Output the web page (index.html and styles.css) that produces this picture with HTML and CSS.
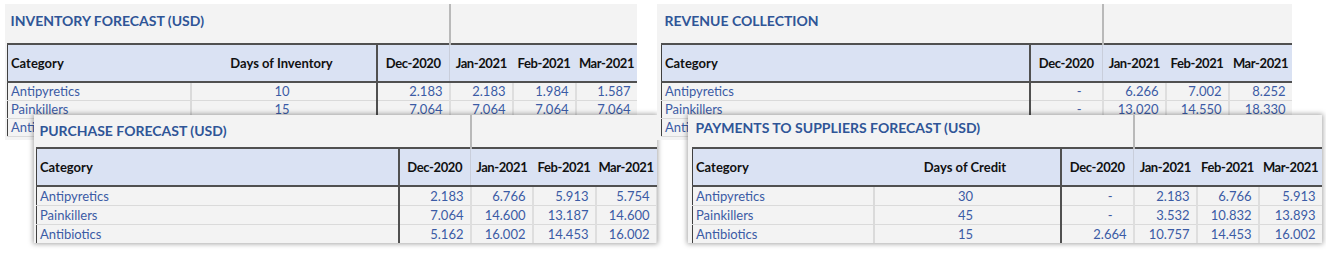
FILE: index.html
```html
<!DOCTYPE html>
<html>
<head>
<meta charset="utf-8">
<link rel="stylesheet" href="styles.css">
</head>
<body>
<div class="board">
  <div class="stack stack-left">
    <section class="panel back inv">
      <table class="sheet w630">
        <colgroup><col style="width:183px"><col style="width:186px"><col style="width:73px"><col style="width:63px"><col style="width:63px"><col style="width:62px"></colgroup>
        <tr class="title-row"><td colspan="3" class="title">INVENTORY FORECAST (USD)</td><td colspan="3" class="title-split"></td></tr>
        <tr class="head"><th class="c0 left">Category</th><th>Days of Inventory</th><th class="split mon">Dec-2020</th><th class="mfirst mon">Jan-2021</th><th class="mon">Feb-2021</th><th class="mon">Mar-2021</th></tr>
        <tr class="row"><td class="c0 cat sep">Antipyretics</td><td class="mid">10</td><td class="num split">2.183</td><td class="num">2.183</td><td class="num">1.984</td><td class="num">1.587</td></tr>
        <tr class="row"><td class="c0 cat sep">Painkillers</td><td class="mid">15</td><td class="num split">7.064</td><td class="num">7.064</td><td class="num">7.064</td><td class="num">7.064</td></tr>
        <tr class="row"><td class="c0 cat sep">Antibiotics</td><td class="mid">20</td><td class="num split">5.162</td><td class="num">5.162</td><td class="num">5.162</td><td class="num">5.162</td></tr>
      </table>
    </section>
    <section class="panel front pur">
      <table class="sheet w620">
        <colgroup><col style="width:362px"><col style="width:72px"><col style="width:62px"><col style="width:63px"><col style="width:61px"></colgroup>
        <tr class="title-row"><td colspan="2" class="title">PURCHASE FORECAST (USD)</td><td colspan="3" class="title-split"></td></tr>
        <tr class="head"><th class="c0 left">Category</th><th class="split mon">Dec-2020</th><th class="mfirst mon">Jan-2021</th><th class="mon">Feb-2021</th><th class="mon">Mar-2021</th></tr>
        <tr class="row"><td class="c0 cat">Antipyretics</td><td class="num split">2.183</td><td class="num">6.766</td><td class="num">5.913</td><td class="num">5.754</td></tr>
        <tr class="row"><td class="c0 cat">Painkillers</td><td class="num split">7.064</td><td class="num">14.600</td><td class="num">13.187</td><td class="num">14.600</td></tr>
        <tr class="row"><td class="c0 cat">Antibiotics</td><td class="num split">5.162</td><td class="num">16.002</td><td class="num">14.453</td><td class="num">16.002</td></tr>
      </table>
    </section>
  </div>
  <div class="stack stack-right">
    <section class="panel back rev">
      <table class="sheet w631">
        <colgroup><col style="width:368px"><col style="width:73px"><col style="width:63px"><col style="width:63px"><col style="width:64px"></colgroup>
        <tr class="title-row"><td colspan="2" class="title">REVENUE COLLECTION</td><td colspan="3" class="title-split"></td></tr>
        <tr class="head"><th class="c0 left">Category</th><th class="split mon">Dec-2020</th><th class="mfirst mon">Jan-2021</th><th class="mon">Feb-2021</th><th class="mon">Mar-2021</th></tr>
        <tr class="row"><td class="c0 cat">Antipyretics</td><td class="num split dash">-</td><td class="num">6.266</td><td class="num">7.002</td><td class="num">8.252</td></tr>
        <tr class="row"><td class="c0 cat">Painkillers</td><td class="num split dash">-</td><td class="num">13.020</td><td class="num">14.550</td><td class="num">18.330</td></tr>
        <tr class="row"><td class="c0 cat">Antibiotics</td><td class="num split dash">-</td><td class="num">15.400</td><td class="num">16.100</td><td class="num">17.200</td></tr>
      </table>
    </section>
    <section class="panel front pay">
      <table class="sheet w630">
        <colgroup><col style="width:181px"><col style="width:187px"><col style="width:73px"><col style="width:63px"><col style="width:62px"><col style="width:64px"></colgroup>
        <tr class="title-row"><td colspan="3" class="title">PAYMENTS TO SUPPLIERS FORECAST (USD)</td><td colspan="3" class="title-split"></td></tr>
        <tr class="head"><th class="c0 left">Category</th><th>Days of Credit</th><th class="split mon">Dec-2020</th><th class="mfirst mon">Jan-2021</th><th class="mon">Feb-2021</th><th class="mon">Mar-2021</th></tr>
        <tr class="row"><td class="c0 cat sep">Antipyretics</td><td class="mid">30</td><td class="num split dash">-</td><td class="num">2.183</td><td class="num">6.766</td><td class="num">5.913</td></tr>
        <tr class="row"><td class="c0 cat sep">Painkillers</td><td class="mid">45</td><td class="num split dash">-</td><td class="num">3.532</td><td class="num">10.832</td><td class="num">13.893</td></tr>
        <tr class="row"><td class="c0 cat sep">Antibiotics</td><td class="mid">15</td><td class="num split">2.664</td><td class="num">10.757</td><td class="num">14.453</td><td class="num">16.002</td></tr>
      </table>
    </section>
  </div>
</div>
</body>
</html>
```
FILE: styles.css
```css
html, body {
  margin: 0;
  padding: 0;
  background: #ffffff;
}
body {
  font-family: Lato, "Open Sans", sans-serif;
  width: 1326px;
  height: 253px;
  overflow: hidden;
}
.board {
  display: flex;
  gap: 20px;
  padding: 4px 0 0 5px;
}
.stack {
  position: relative;
}
.stack-left { width: 632px; }
.stack-right { width: 635px; }

.panel {
  background: #f3f3f3;
  overflow: hidden;
}
.back {
  height: 136px;
}
.inv { padding-left: 2px; width: 630px; }
.rev { padding-left: 4px; width: 631px; }

.front {
  position: absolute;
  top: 111px;
  box-shadow: 0 0 5px 1px rgba(0, 0, 0, 0.35);
}
.pur {
  left: 29px;
  width: 621px;
  height: 128px;
  padding-left: 2px;
}
.pay {
  left: 31px;
  width: 630px;
  height: 128px;
  padding-left: 4px;
}

.sheet {
  border-collapse: collapse;
  table-layout: fixed;
  font-size: 13px;
  line-height: 16px;
  color: #3b5ba5;
}
.w620 { width: 620px; }
.w630 { width: 630px; }
.w631 { width: 631px; }
.sheet td, .sheet th {
  padding: 0 6px 0 3px;
  white-space: nowrap;
  overflow: hidden;
}
.sheet tr.title-row { height: 40px; }
.front .sheet tr.title-row { height: 33px; }
.sheet tr.head { height: 38px; }
.sheet tr.row { height: 18px; }
.front .sheet tr.row { height: 19px; }

.sheet td.title {
  font-weight: 700;
  font-size: 14px;
  color: #2f5597;
  padding-left: 3px;
  padding-bottom: 5px;
  vertical-align: middle;
  border-bottom: 0;
}
.pur .sheet td.title { padding-bottom: 0; }
.pay .sheet td.title { padding-bottom: 6px; }
.sheet td.title-split {
  border-left: 2px solid #b9b9b9;
  border-bottom: 0;
}
.head th {
  background: #dae2f3;
  color: #111111;
  font-weight: 700;
  font-size: 13px;
  text-align: center;
  border-top: 2px solid #505050;
  border-bottom: 2px solid #505050;
}
.sheet .head th.mon {
  padding: 0 2px;
  letter-spacing: -0.4px;
}
.head th.left { text-align: left; }
.head th.mfirst { border-left: 1px solid #c9cedb; }
.row td {
  border-bottom: 1px solid #dadada;
}
.sheet .c0 { border-left: 1px solid #404040; }
.sheet .split { border-left: 2px solid #505050; }
.cat { text-align: left; }
.sep { border-right: 2px solid #dadada; }
.mid { text-align: center; }
.num {
  text-align: right;
  border-right: 2px solid #dedede;
}
.sheet td.dash { padding-right: 20px; }
```
